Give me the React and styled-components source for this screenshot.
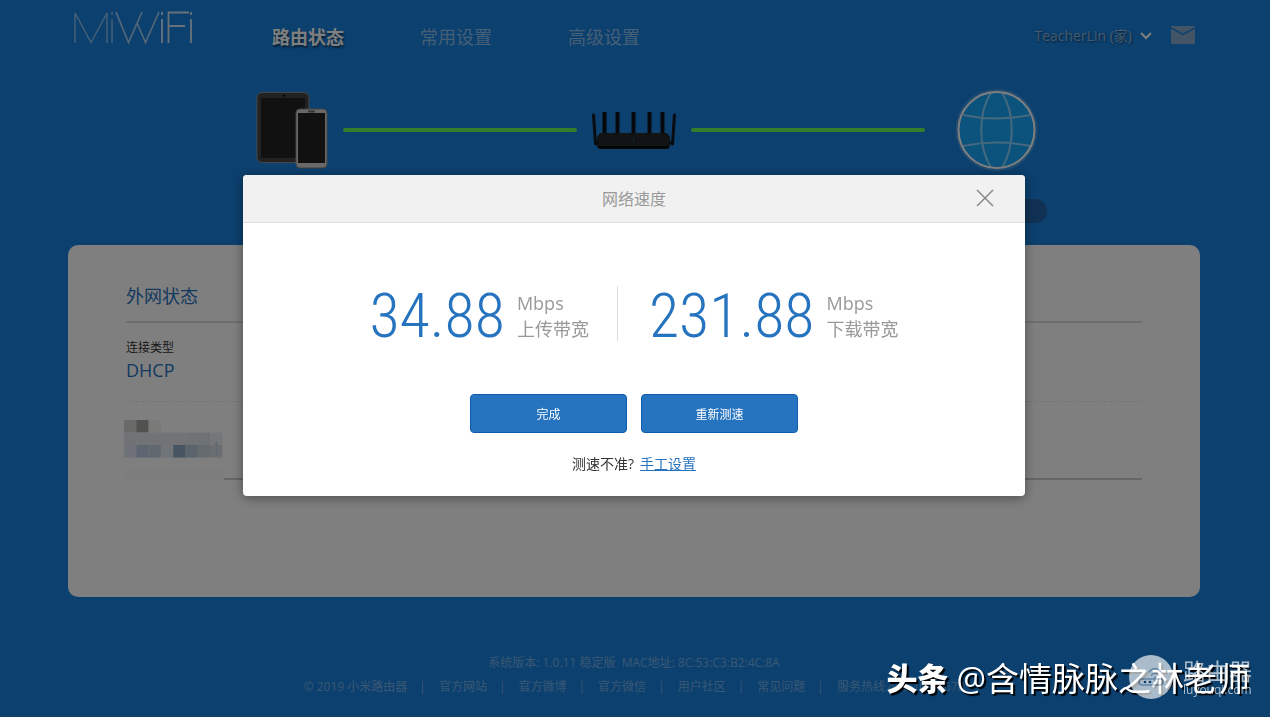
import React from 'react';
import styled, { createGlobalStyle } from 'styled-components';

const GlobalStyle = createGlobalStyle`
  * {
    box-sizing: border-box;
  }

  body {
    margin: 0;
    background: #1880dc;
    font-family: 'Open Sans', 'Noto Sans CJK SC', sans-serif;
    font-size: 12px;
    color: #333;
  }

  a {
    color: inherit;
    text-decoration: none;
  }
`;

const Page = styled.div`
  display: flex;
  flex-direction: column;
  min-height: 100vh;
  overflow: hidden;
  padding: 0 70px 0 68px;
`;

const Header = styled.header`
  display: flex;
  align-items: flex-start;
  height: 82px;
  padding: 0 5px;
`;

const Logo = styled.a`
  display: block;
  width: 120px;
  height: 48px;
  margin-right: 79px;

  svg {
    display: block;
  }
`;

const Nav = styled.nav`
  display: flex;
  flex: 1;
  gap: 76px;
  padding-top: 23px;
`;

const NavLink = styled.a`
  font-size: 18px;
  line-height: 28px;
  font-weight: ${({ $active }) => ($active ? 700 : 400)};
  color: ${({ $active }) => ($active ? '#fff' : 'rgba(255, 255, 255, 0.5)')};
  text-shadow: ${({ $active }) => ($active ? '1px 2px 2px rgba(0, 0, 0, 0.5)' : 'none')};
`;

const UserButton = styled.button`
  display: flex;
  align-items: center;
  gap: 8px;
  margin: 24px 19px 0 0;
  padding: 0;
  border: 0;
  background: none;
  font-family: inherit;
  font-size: 14px;
  line-height: 24px;
  color: rgba(255, 255, 255, 0.5);
  text-shadow: 1px 1px 2px rgba(0, 0, 0, 0.5);
  cursor: pointer;
`;

const MailButton = styled.button`
  margin: 26px 0 0;
  padding: 0;
  border: 0;
  background: none;
  cursor: pointer;

  svg {
    display: block;
  }
`;

const Topology = styled.section`
  display: flex;
  align-items: center;
  align-self: center;
  height: 96px;
  padding-left: 42px;
`;

const Device = styled.div`
  display: flex;
  justify-content: center;
  width: ${({ $width }) => $width}px;
`;

const Link = styled.div`
  width: 234px;
  height: 4px;
  border-radius: 2px;
  background: #66ff57;
`;

const Labels = styled.div`
  display: flex;
  justify-content: flex-end;
  height: 67px;
  padding: 21px 153px 0 0;
`;

const SpeedPill = styled.span`
  width: 104px;
  height: 24px;
  border-radius: 12px;
  background: #2363a8;
`;

const Card = styled.main`
  height: 352px;
  padding: 36px 58px;
  border-radius: 10px;
  background: #fff;
`;

const CardTitle = styled.h2`
  margin: 0;
  padding-bottom: 10px;
  border-bottom: 2px solid #ddd;
  font-size: 18px;
  line-height: 30px;
  font-weight: 400;
  color: #2673bf;
`;

const Info = styled.dl`
  height: 79px;
  margin: 0;
  padding-top: 16px;
  border-bottom: 1px dashed #e8e8e8;

  dt {
    line-height: 18px;
  }

  dd {
    margin: 0;
    font-size: 18px;
    line-height: 26px;
    color: #2673bf;
  }
`;

const Hidden = styled.div`
  height: 78px;
  padding-top: 18px;
  margin-left: -2px;
  border-bottom: 2px solid #ccc;

  svg {
    display: block;
  }
`;

const Footer = styled.footer`
  padding-top: 54px;
  line-height: 24px;
  text-align: center;
  color: rgba(255, 255, 255, 0.4);

  p {
    margin: 0;
    white-space: pre-wrap;
  }
`;

const FooterLinks = styled.div`
  display: flex;
  justify-content: center;
`;

const FooterItem = styled.span`
  & + &::before {
    content: '|';
    margin: 0 13px 0 12px;
  }
`;

const Overlay = styled.div`
  position: fixed;
  inset: 0;
  display: flex;
  align-items: flex-start;
  justify-content: center;
  padding: 175px 2px 0 0;
  background: rgba(0, 0, 0, 0.5);
`;

const Dialog = styled.div`
  width: 782px;
  border-radius: 4px;
  background: #fff;
  box-shadow: 0 2px 12px rgba(0, 0, 0, 0.4);
  overflow: hidden;
`;

const DialogHeader = styled.div`
  display: grid;
  grid-template-columns: 80px 1fr 80px;
  align-items: center;
  height: 48px;
  padding-bottom: 2px;
  border-bottom: 1px solid #ddd;
  background: #f1f1f1;

  h1 {
    grid-column: 2;
    margin: 0;
    font-size: 16px;
    font-weight: 400;
    text-align: center;
    color: #999;
  }
`;

const CloseButton = styled.button`
  justify-self: center;
  padding: 0;
  border: 0;
  background: none;
  cursor: pointer;

  svg {
    display: block;
  }
`;

const DialogBody = styled.div`
  display: flex;
  flex-direction: column;
  align-items: center;
  padding: 63px 0 21px;
`;

const Speeds = styled.div`
  display: flex;
  margin-bottom: 53px;
`;

const Speed = styled.div`
  display: flex;
  align-items: center;
  gap: 12px;
  height: 55px;
  padding-top: 5px;

  & + & {
    margin-left: 28px;
    padding-left: 32px;
    background: linear-gradient(#ddd, #ddd) no-repeat left / 1px 100%;
  }

  strong {
    font-family: 'Roboto Condensed', 'Liberation Sans Narrow', Roboto, sans-serif;
    font-size: 62px;
    line-height: 62px;
    font-weight: 300;
    color: #2673bf;
  }
`;

const SpeedUnit = styled.span`
  display: flex;
  flex-direction: column;
  font-size: 18px;
  line-height: 26px;
  color: #999;
`;

const Actions = styled.div`
  display: flex;
  gap: 14px;
  margin-bottom: 20px;
`;

const Button = styled.button`
  width: 157px;
  height: 39px;
  border: 1px solid #0f5cac;
  border-radius: 4px;
  background: #2673bf;
  font-family: inherit;
  font-size: 12px;
  color: #fff;
  cursor: pointer;
`;

const Hint = styled.p`
  margin: 0;
  font-size: 14px;
  line-height: 22px;

  a {
    margin-left: 6px;
    color: #2673bf;
    text-decoration: underline;
  }
`;

const Watermark = styled.div`
  position: fixed;
  right: 20px;
  bottom: 14px;
  display: flex;
  align-items: center;
  gap: 8px;
  font-size: 33px;
  line-height: 46px;
  color: #fff;
  text-shadow: 2px 2px 1px #000;
  white-space: nowrap;

  b {
    padding-bottom: 2px;
    font-size: 31px;
    font-weight: 900;
  }
`;

const SiteMark = styled.div`
  position: fixed;
  right: 18px;
  bottom: 18px;
  display: flex;
  align-items: center;
  gap: 10px;
  color: #fff;
  opacity: 0.65;

  div {
    display: flex;
    flex-direction: column;
  }

  strong {
    font-size: 23px;
    line-height: 24px;
    font-weight: 400;
  }

  small {
    font-size: 12px;
    line-height: 13px;
  }
`;

const MOSAIC = [
  ['#d5d6d2', '#a5a6a2', '#f4f4f3'],
  ['#e2e5ea', '#e4e6ec', '#e4e6ec', '#e3e7ec', '#e3e7ec', '#e2e5ea', '#dfe4ea', '#eceff2'],
  ['#dce4f0', '#b9cbe0', '#c4d0e0', '#e2e8f2', '#8ea9c4', '#b6c7d8', '#ccd6e0', '#d5dde5'],
];

const FOOTER_LINKS = ['官方网站', '官方微博', '官方微信', '用户社区', '常见问题'];

const Tablets = () => (
  <svg width="72" height="78" viewBox="0 0 72 78">
    <rect x="1" y="1.500" width="52" height="70" rx="5" fill="#444" stroke="#8c8c8c" />
    <rect x="5" y="7" width="44" height="60" fill="#222" />
    <circle cx="28" cy="4.500" r="1.300" fill="#111" />
    <rect x="40" y="18" width="31" height="59" rx="4" fill="#d2d2d2" stroke="#888" />
    <rect x="42" y="22" width="27" height="50" fill="#222" />
    <rect x="52" y="19.500" width="7" height="2" rx="1" fill="#666" />
  </svg>
);

const Router = () => (
  <svg width="86" height="40" viewBox="0 0 86 40">
    <path
      d="M2.500 5l2 29M83.500 5l-2 29"
      stroke="#12171c"
      strokeWidth="3"
      strokeLinecap="round"
    />
    <path
      d="M13.500 2v21M26.500 2v21M42.500 2v21M58.500 2v21M71.500 2v21"
      stroke="#0c1118"
      strokeWidth="4"
    />
    <path d="M9 23h67l3 4v9q0 3-4 3H10q-4 0-4-3v-9z" fill="#24262a" />
    <path d="M7 36q1 3 4 3h63q4 0 4-3z" fill="#0a0c10" />
    <path d="M4 33h4M78 33h4" stroke="#101318" strokeWidth="3" />
    <path d="M42.500 27v6" stroke="#205048" />
  </svg>
);

const Globe = () => (
  <svg width="84" height="84" viewBox="0 0 84 84" fill="none">
    <circle cx="41.500" cy="42" r="39.500" stroke="#fff" strokeWidth="3" opacity="0.2" />
    <circle cx="41.500" cy="42" r="38" fill="#18acff" fillOpacity="0.8" stroke="#fff" strokeWidth="2" />
    <path
      d="M36 4.500c-13 21-13 54 0 75M47 4.500c13 21 13 54 0 75M8 27q33.500 7 67 0M8 58q33.500-7 67 0"
      stroke="#fff"
      strokeOpacity="0.5"
      strokeWidth="2"
    />
  </svg>
);

const Mosaic = () => (
  <svg width="100" height="62" viewBox="0 0 100 62" aria-hidden="true">
    <rect y="49" width="100" height="12" fill="#fafafa" />
    {MOSAIC.map((row, y) =>
      row.map((fill, x) => (
        <rect
          key={`${x}-${y}`}
          x={x * 12.3}
          y={y * 12.5}
          width="12.400"
          height="12.600"
          fill={fill}
        />
      ))
    )}
    <path d="M90 24l3-2v12" fill="none" stroke="#b6c8da" />
  </svg>
);

const SpeedValue = ({ value, label }) => (
  <Speed>
    <strong>{value}</strong>
    <SpeedUnit>
      <span>Mbps</span>
      <span>{label}</span>
    </SpeedUnit>
  </Speed>
);

const App = () => (
  <>
    <GlobalStyle />
    <Page>
      <Header>
        <Logo href="#home" aria-label="MiWiFi">
          <svg width="120" height="48" viewBox="0 0 120 48" fill="none" stroke="#fff" opacity="0.8">
            <path
              d="M2 43V13L18 42.500 34 13v30M39 19v24M39 12v3"
              strokeWidth="1.300"
              opacity="0.7"
            />
            <path
              d="M43 12l12.500 30.500L69 12M64 23l8.500 19.500L86 12"
              strokeWidth="1.600"
              opacity="0.8"
            />
            <path d="M89 19v24M89 12v3M95.500 43V12.500H116M95.500 26H112M118 19v24M118 12v3" strokeWidth="1.800" />
          </svg>
        </Logo>
        <Nav>
          <NavLink href="#status" $active>
            路由状态
          </NavLink>
          <NavLink href="#common">常用设置</NavLink>
          <NavLink href="#advanced">高级设置</NavLink>
        </Nav>
        <UserButton type="button">
          TeacherLin (家)
          <svg width="12" height="8" viewBox="0 0 12 8" fill="none" stroke="#fff" strokeWidth="2">
            <path d="M1 1l5 5 5-5" />
          </svg>
        </UserButton>
        <MailButton type="button" aria-label="消息">
          <svg width="24" height="18" viewBox="0 0 24 18">
            <rect width="24" height="18" rx="1" fill="#86a9cc" />
            <path d="M0 2l12 6.500L24 2" fill="none" stroke="#1880dc" strokeWidth="1.500" />
          </svg>
        </MailButton>
      </Header>

      <Topology>
        <Device $width={102}>
          <Tablets />
        </Device>
        <Link />
        <Device $width={114}>
          <Router />
        </Device>
        <Link />
        <Device $width={144}>
          <Globe />
        </Device>
      </Topology>
      <Labels>
        <SpeedPill />
      </Labels>

      <Card>
        <CardTitle>外网状态</CardTitle>
        <Info>
          <dt>连接类型</dt>
          <dd>DHCP</dd>
        </Info>
        <Hidden>
          <Mosaic />
        </Hidden>
      </Card>

      <Footer>
        <p>系统版本: 1.0.11 稳定版{'  '}MAC地址: 8C:53:C3:B2:4C:8A</p>
        <FooterLinks>
          <FooterItem>© 2019 小米路由器</FooterItem>
          {FOOTER_LINKS.map((text) => (
            <FooterItem key={text}>
              <a href="#footer">{text}</a>
            </FooterItem>
          ))}
          <FooterItem>服务热线 400-100-5678</FooterItem>
        </FooterLinks>
      </Footer>
    </Page>

    <Overlay>
      <Dialog role="dialog" aria-labelledby="speed-title">
        <DialogHeader>
          <h1 id="speed-title">网络速度</h1>
          <CloseButton type="button" aria-label="关闭">
            <svg width="18" height="18" viewBox="0 0 18 18" stroke="#888" strokeWidth="1.500">
              <path d="M1 1l16 16M17 1L1 17" />
            </svg>
          </CloseButton>
        </DialogHeader>
        <DialogBody>
          <Speeds>
            <SpeedValue value="34.88" label="上传带宽" />
            <SpeedValue value="231.88" label="下载带宽" />
          </Speeds>
          <Actions>
            <Button type="button">完成</Button>
            <Button type="button">重新测速</Button>
          </Actions>
          <Hint>
            测速不准?
            <a href="#manual">手工设置</a>
          </Hint>
        </DialogBody>
      </Dialog>
    </Overlay>

    <Watermark>
      <b>头条</b>
      <span>@含情脉脉之林老师</span>
    </Watermark>
    <SiteMark>
      <svg width="44" height="44" viewBox="0 0 44 44">
        <circle cx="22" cy="22" r="22" fill="#fff" />
        <path
          d="M20 17q6-7 12 0M22.500 20q3.500-4 7 0M26 22v4M12 24h20q2 0 2 3t-3 3H13q-3 0-3-3t2-3z"
          fill="none"
          stroke="#8faac4"
          strokeWidth="1.500"
          strokeLinecap="round"
        />
        <circle cx="16" cy="27" r="1.300" fill="#0c406e" />
        <circle cx="21" cy="27" r="1.300" fill="#0c406e" />
      </svg>
      <div>
        <strong>路由器</strong>
        <small>luyouqi.com</small>
      </div>
    </SiteMark>
  </>
);

export default App;
